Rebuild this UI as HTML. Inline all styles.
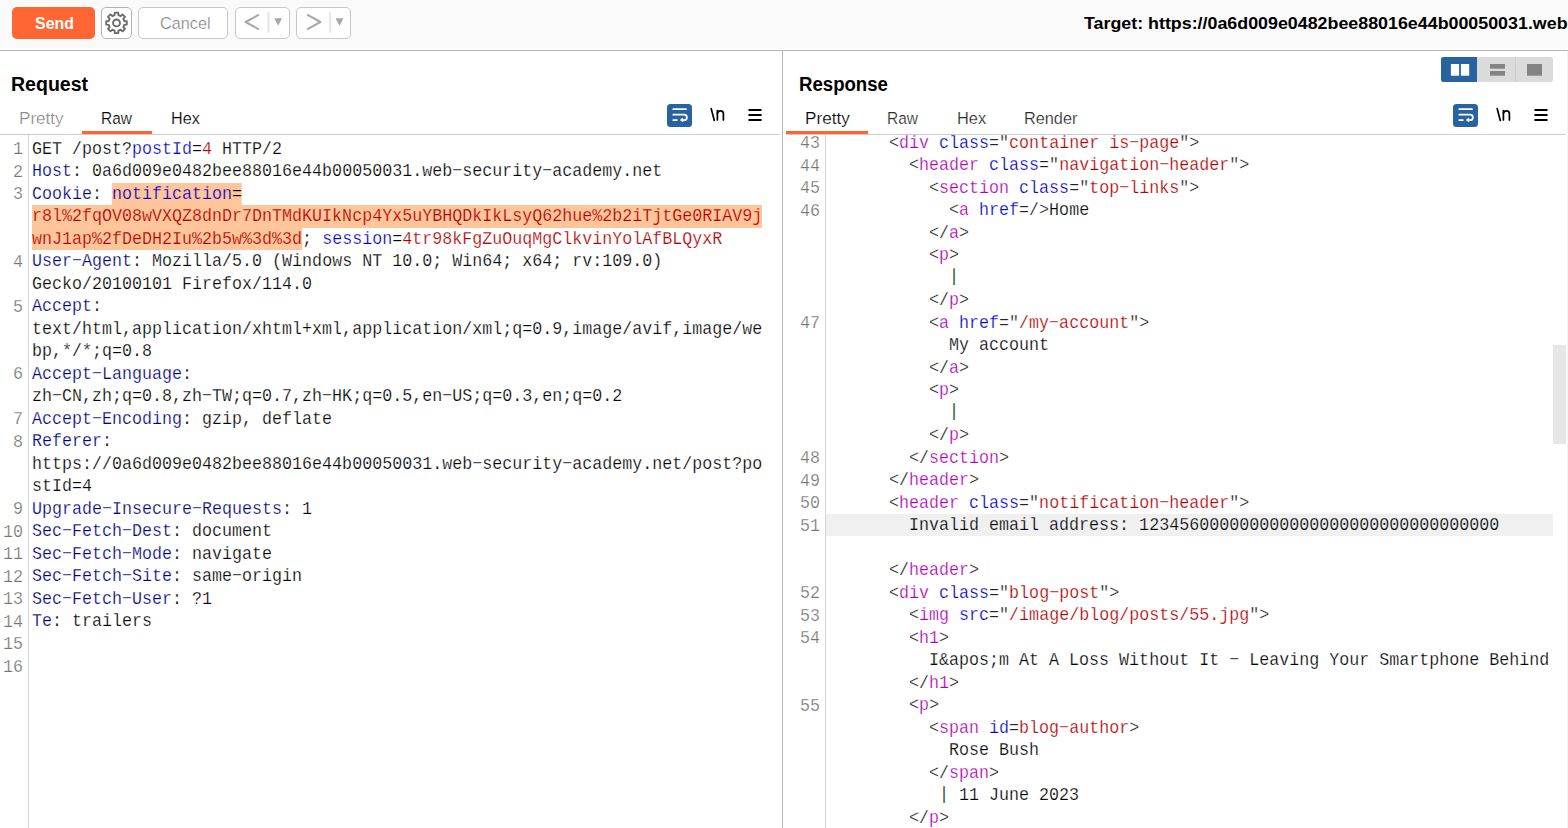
<!DOCTYPE html>
<html><head><meta charset="utf-8"><title>Burp Repeater</title>
<style>
*{box-sizing:border-box}
html,body{margin:0;padding:0}
body{width:1568px;height:828px;overflow:hidden;background:#fff;position:relative;font-family:"Liberation Sans",sans-serif;color:#000}
.abs{position:absolute}
#toolbar{left:0;top:0;width:1568px;height:49px;background:#fafafa}
#tbline{left:0;top:50px;width:1568px;height:1px;background:#b9b5b5}
.btn{position:absolute;top:7px;height:32px;border:1px solid #c8c8c8;border-radius:5px;background:#fff}
#send{left:12px;top:7px;width:83px;height:32px;background:#ff6633;border-radius:5px;color:#fff;font-weight:bold;font-size:17px;line-height:32px;text-align:center}
.sans{position:absolute;white-space:nowrap;transform-origin:0 0;line-height:24px}
.code{position:absolute;font-family:"Liberation Mono",monospace;font-size:19px;line-height:22.5px;transform:scaleX(.8774);transform-origin:0 0;color:#000;-webkit-text-stroke:0.25px #fff}
.code .l{height:22.5px;white-space:pre}
.gut{position:absolute;font-family:"Liberation Mono",monospace;font-size:18px;line-height:22.5px;transform:scaleX(.9259);transform-origin:100% 0;color:#747474;text-align:right;-webkit-text-stroke:0.25px #fff}
.gut div{height:22.5px}
.h{color:#000078}.n{color:#0000c4}.v{color:#b00000}.t{color:#b000b4}.p{color:#222}
.hl{background:#ffc69c;display:inline-block;height:22.5px;-webkit-text-stroke-color:#ffc69c}
.bar{position:relative;top:-1.2px}
.cur{-webkit-text-stroke-color:#f0f0f0}
</style></head><body>
<!-- toolbar -->
<div id="toolbar" class="abs"></div><div id="tbline" class="abs"></div>
<div id="send" class="abs"></div>
<div class="btn" style="left:101px;width:31px;border-color:#b6b2b2"></div>
<div class="btn" style="left:138px;width:90px"></div>
<div class="btn" style="left:235px;width:55px"></div>
<div class="btn" style="left:296px;width:55px"></div>


<!-- gear -->
<svg class="abs" style="left:101px;top:7px" width="32" height="32" viewBox="-16 -16 32 32"><g transform="translate(-0.5,-0.1)" fill="none" stroke="#6a6a6a" stroke-width="1.9" stroke-linejoin="round"><path d="M-1.93 -7.76 L-1.71 -10.26 L1.71 -10.26 L1.93 -7.76 L4.13 -6.85 L6.05 -8.46 L8.46 -6.05 L6.85 -4.13 L7.76 -1.93 L10.26 -1.71 L10.26 1.71 L7.76 1.93 L6.85 4.13 L8.46 6.05 L6.05 8.46 L4.13 6.85 L1.93 7.76 L1.71 10.26 L-1.71 10.26 L-1.93 7.76 L-4.13 6.85 L-6.05 8.46 L-8.46 6.05 L-6.85 4.13 L-7.76 1.93 L-10.26 1.71 L-10.26 -1.71 L-7.76 -1.93 L-6.85 -4.13 L-8.46 -6.05 L-6.05 -8.46 L-4.13 -6.85Z"/><circle cx="0" cy="0" r="3.45"/></g></svg>
<!-- history arrows -->
<svg class="abs" style="left:235px;top:7px" width="116" height="32" viewBox="0 0 116 32">
 <g fill="none" stroke="#a8a8a8" stroke-width="2" stroke-linejoin="round"><path d="M23.9 7.7 L10.6 15 L23.9 22.3"/><path d="M72.1 7.7 L85.4 15 L72.1 22.3"/></g>
 <rect x="32.4" y="5" width="2" height="20.6" fill="#e4e4e4"/><rect x="94.2" y="5" width="1.8" height="20.6" fill="#e4e4e4"/>
 <path d="M39.3 11.2 L47 11.2 L43.15 18.8 Z" fill="#a6a6a6"/><path d="M100.6 11.2 L108.5 11.2 L104.55 18.8 Z" fill="#a6a6a6"/>
</svg>
<!-- layout toggle -->
<svg class="abs" style="left:1441px;top:57px" width="113" height="26" viewBox="0 0 113 26">
 <rect x="0" y="0" width="112" height="25" rx="2.8" fill="#dbdbdb"/>
 <path d="M2.8 0 H36 V25 H2.8 A2.8 2.8 0 0 1 0 22.2 V2.8 A2.8 2.8 0 0 1 2.8 0Z" fill="#28629f"/>
 <rect x="74" y="0" width="1" height="25" fill="#cfcfcf"/>
 <rect x="9.9" y="7" width="8.2" height="11.7" fill="#fff"/><rect x="19.9" y="7" width="8.3" height="11.7" fill="#fff"/>
 <rect x="49" y="7" width="15" height="4.7" fill="#848484"/><rect x="49" y="14" width="15" height="4.7" fill="#848484"/>
 <rect x="86" y="7" width="15" height="11.7" fill="#848484"/>
</svg>
<!-- wrap / newline / menu icons: request -->
<svg class="abs" style="left:667px;top:104px" width="100" height="24" viewBox="0 0 100 24">
 <rect x="0" y="0" width="25" height="23" rx="3.5" fill="#28629f"/>
 <g fill="none" stroke="#fff" stroke-width="1.8" stroke-linecap="round"><path d="M6.3 5.2 H19"/><path d="M6.3 10.7 H17.1 A2.75 2.75 0 0 1 17.1 16.2 H15.5"/><path d="M6.3 16.1 H9.9"/></g>
 <path d="M15.7 14.1 L13.3 15.95 L15.7 17.8 Z" fill="#fff" stroke="#fff" stroke-width="0.7" stroke-linejoin="round"/>
 <g fill="none" stroke="#000" stroke-width="1.7" stroke-linecap="round"><path d="M44.2 4.6 L47.3 16.5"/><path d="M50.4 16 V6.6"/><path d="M50.4 9.4 Q50.9 6.8 53.6 6.8 Q56.4 6.8 56.4 9.7 V16"/></g>
 <rect x="81.3" y="5.1" width="13.4" height="1.85" rx=".7" fill="#000"/><rect x="81.3" y="10.1" width="13.4" height="1.85" rx=".7" fill="#000"/><rect x="81.3" y="15.1" width="13.4" height="1.85" rx=".7" fill="#000"/>
</svg>
<svg class="abs" style="left:1453px;top:104px" width="100" height="24" viewBox="0 0 100 24">
 <rect x="0" y="0" width="25" height="23" rx="3.5" fill="#28629f"/>
 <g fill="none" stroke="#fff" stroke-width="1.8" stroke-linecap="round"><path d="M6.3 5.2 H19"/><path d="M6.3 10.7 H17.1 A2.75 2.75 0 0 1 17.1 16.2 H15.5"/><path d="M6.3 16.1 H9.9"/></g>
 <path d="M15.7 14.1 L13.3 15.95 L15.7 17.8 Z" fill="#fff" stroke="#fff" stroke-width="0.7" stroke-linejoin="round"/>
 <g fill="none" stroke="#000" stroke-width="1.7" stroke-linecap="round"><path d="M44.2 4.6 L47.3 16.5"/><path d="M50.4 16 V6.6"/><path d="M50.4 9.4 Q50.9 6.8 53.6 6.8 Q56.4 6.8 56.4 9.7 V16"/></g>
 <rect x="81.3" y="5.1" width="13.4" height="1.85" rx=".7" fill="#000"/><rect x="81.3" y="10.1" width="13.4" height="1.85" rx=".7" fill="#000"/><rect x="81.3" y="15.1" width="13.4" height="1.85" rx=".7" fill="#000"/>
</svg>


<div class="sans" id="t_send" style="left:34.70px;top:10.91px;font-size:17.30px;font-weight:bold;color:#fff;transform:scaleX(0.9231)">Send</div>
<div class="sans" id="t_cancel" style="left:159.50px;top:11.61px;font-size:17.00px;-webkit-text-stroke:0.2px #fff;color:#8c8c8c;transform:scaleX(0.9552)">Cancel</div>
<div class="sans" id="t_target" style="left:1084.30px;top:11.86px;font-size:17.00px;font-weight:bold;color:#000;transform:scaleX(1.0492)">Target: https://0a6d009e0482bee88016e44b00050031.web</div>
<div class="sans" id="t_request" style="left:11.40px;top:72.21px;font-size:19.60px;font-weight:bold;color:#000;transform:scaleX(0.9977)">Request</div>
<div class="sans" id="t_response" style="left:799.00px;top:72.21px;font-size:19.60px;font-weight:bold;color:#000;transform:scaleX(0.9497)">Response</div>
<div class="sans" id="t_q_pretty" style="left:19.00px;top:106.98px;font-size:16.80px;-webkit-text-stroke:0.2px #fff;color:#8c8c8c;transform:scaleX(1.0170)">Pretty</div>
<div class="sans" id="t_q_raw" style="left:100.90px;top:106.98px;font-size:16.80px;-webkit-text-stroke:0.2px #fff;color:#000;transform:scaleX(0.9190)">Raw</div>
<div class="sans" id="t_q_hex" style="left:171.10px;top:106.98px;font-size:16.80px;-webkit-text-stroke:0.2px #fff;color:#000;transform:scaleX(0.9633)">Hex</div>
<div class="sans" id="t_s_pretty" style="left:805.00px;top:106.88px;font-size:16.80px;-webkit-text-stroke:0.2px #fff;color:#000;transform:scaleX(1.0209)">Pretty</div>
<div class="sans" id="t_s_raw" style="left:886.90px;top:106.88px;font-size:16.80px;-webkit-text-stroke:0.2px #fff;color:#2b2b2b;transform:scaleX(0.9243)">Raw</div>
<div class="sans" id="t_s_hex" style="left:956.90px;top:106.88px;font-size:16.80px;-webkit-text-stroke:0.2px #fff;color:#2b2b2b;transform:scaleX(0.9758)">Hex</div>
<div class="sans" id="t_s_render" style="left:1024.00px;top:106.88px;font-size:16.80px;-webkit-text-stroke:0.2px #fff;color:#2b2b2b;transform:scaleX(0.9701)">Render</div>
<!-- panel divider -->
<div class="abs" style="left:782px;top:51px;width:1px;height:777px;background:#b9b5b5"></div>

<div class="abs" style="left:1567px;top:51px;width:1px;height:777px;background:#f3f3f3"></div>
<!-- Request header -->
<div class="abs" style="left:82px;top:131px;width:70px;height:3px;background:#ff6633"></div>
<div class="abs" style="left:0;top:134px;width:780px;height:1px;background:#c8cccc"></div>

<!-- Response header -->
<div class="abs" style="left:786px;top:131px;width:82px;height:3px;background:#ff6633"></div>
<div class="abs" style="left:786px;top:134px;width:780px;height:1px;background:#c8cccc"></div>

<!-- Request editor -->
<div class="abs" style="left:0;top:135px;width:781px;height:693px;overflow:hidden">
  <div class="abs" style="left:28px;top:0;width:1px;height:693px;background:#d6d6d6"></div>
  <div class="gut" style="right:758px;top:3px;width:40px">
<div>1</div>
<div>2</div>
<div>3</div>
<div></div>
<div></div>
<div>4</div>
<div></div>
<div>5</div>
<div></div>
<div></div>
<div>6</div>
<div></div>
<div>7</div>
<div>8</div>
<div></div>
<div></div>
<div>9</div>
<div>10</div>
<div>11</div>
<div>12</div>
<div>13</div>
<div>14</div>
<div>15</div>
<div>16</div>
  </div>
  <div class="code" style="left:32px;top:2.5px;width:860px">
<div class="l ">GET /post?<span class="n">postId</span>=<span class="v">4</span> HTTP/2</div>
<div class="l "><span class="h">Host</span>: 0a6d009e0482bee88016e44b00050031.web−security−academy.net</div>
<div class="l "><span class="h">Cookie</span>: <span class="hl"><span class="n">notification</span>=</span></div>
<div class="l "><span class="hl"><span class="v">r8l%2fqOV08wVXQZ8dnDr7DnTMdKUIkNcp4Yx5uYBHQDkIkLsyQ62hue%2b2iTjtGe0RIAV9j</span></span></div>
<div class="l "><span class="hl"><span class="v">wnJ1ap%2fDeDH2Iu%2b5w%3d%3d</span></span>; <span class="n">session</span>=<span class="v">4tr98kFgZuOuqMgClkvinYolAfBLQyxR</span></div>
<div class="l "><span class="h">User−Agent</span>: Mozilla/5.0 (Windows NT 10.0; Win64; x64; rv:109.0)</div>
<div class="l ">Gecko/20100101 Firefox/114.0</div>
<div class="l "><span class="h">Accept</span>:</div>
<div class="l ">text/html,application/xhtml+xml,application/xml;q=0.9,image/avif,image/we</div>
<div class="l ">bp,*/*;q=0.8</div>
<div class="l "><span class="h">Accept−Language</span>:</div>
<div class="l ">zh−CN,zh;q=0.8,zh−TW;q=0.7,zh−HK;q=0.5,en−US;q=0.3,en;q=0.2</div>
<div class="l "><span class="h">Accept−Encoding</span>: gzip, deflate</div>
<div class="l "><span class="h">Referer</span>:</div>
<div class="l ">https://0a6d009e0482bee88016e44b00050031.web−security−academy.net/post?po</div>
<div class="l ">stId=4</div>
<div class="l "><span class="h">Upgrade−Insecure−Requests</span>: 1</div>
<div class="l "><span class="h">Sec−Fetch−Dest</span>: document</div>
<div class="l "><span class="h">Sec−Fetch−Mode</span>: navigate</div>
<div class="l "><span class="h">Sec−Fetch−Site</span>: same−origin</div>
<div class="l "><span class="h">Sec−Fetch−User</span>: ?1</div>
<div class="l "><span class="h">Te</span>: trailers</div>
<div class="l "></div>
<div class="l "></div>
  </div>
</div>

<!-- Response editor -->
<div class="abs" style="left:786px;top:135px;width:782px;height:693px;overflow:hidden">
  <div class="abs" style="left:40px;top:379px;width:727px;height:21.75px;background:#f0f0f0"></div>
  <div class="abs" style="left:39px;top:0;width:1px;height:693px;background:#d6d6d6"></div>
  <div class="gut" style="right:748px;top:-3px;width:40px">
<div>43</div>
<div>44</div>
<div>45</div>
<div>46</div>
<div></div>
<div></div>
<div></div>
<div></div>
<div>47</div>
<div></div>
<div></div>
<div></div>
<div></div>
<div></div>
<div>48</div>
<div>49</div>
<div>50</div>
<div>51</div>
<div></div>
<div></div>
<div>52</div>
<div>53</div>
<div>54</div>
<div></div>
<div></div>
<div>55</div>
<div></div>
<div></div>
<div></div>
<div></div>
<div></div>
  </div>
  <div class="code" style="left:43px;top:-3.5px;width:830px">
<div class="l ">      <span class="p">&lt;</span><span class="t">div</span> <span class="n">class</span><span class="p">=</span><span class="p">"</span><span class="v">container is−page</span><span class="p">"</span><span class="p">&gt;</span></div>
<div class="l ">        <span class="p">&lt;</span><span class="t">header</span> <span class="n">class</span><span class="p">=</span><span class="p">"</span><span class="v">navigation−header</span><span class="p">"</span><span class="p">&gt;</span></div>
<div class="l ">          <span class="p">&lt;</span><span class="t">section</span> <span class="n">class</span><span class="p">=</span><span class="p">"</span><span class="v">top−links</span><span class="p">"</span><span class="p">&gt;</span></div>
<div class="l ">            <span class="p">&lt;</span><span class="t">a</span> <span class="n">href</span><span class="p">=/&gt;</span>Home</div>
<div class="l ">          <span class="p">&lt;/</span><span class="t">a</span><span class="p">&gt;</span></div>
<div class="l ">          <span class="p">&lt;</span><span class="t">p</span><span class="p">&gt;</span></div>
<div class="l ">            <span class="bar">|</span></div>
<div class="l ">          <span class="p">&lt;/</span><span class="t">p</span><span class="p">&gt;</span></div>
<div class="l ">          <span class="p">&lt;</span><span class="t">a</span> <span class="n">href</span><span class="p">=</span><span class="p">"</span><span class="v">/my−account</span><span class="p">"</span><span class="p">&gt;</span></div>
<div class="l ">            My account</div>
<div class="l ">          <span class="p">&lt;/</span><span class="t">a</span><span class="p">&gt;</span></div>
<div class="l ">          <span class="p">&lt;</span><span class="t">p</span><span class="p">&gt;</span></div>
<div class="l ">            <span class="bar">|</span></div>
<div class="l ">          <span class="p">&lt;/</span><span class="t">p</span><span class="p">&gt;</span></div>
<div class="l ">        <span class="p">&lt;/</span><span class="t">section</span><span class="p">&gt;</span></div>
<div class="l ">      <span class="p">&lt;/</span><span class="t">header</span><span class="p">&gt;</span></div>
<div class="l ">      <span class="p">&lt;</span><span class="t">header</span> <span class="n">class</span><span class="p">=</span><span class="p">"</span><span class="v">notification−header</span><span class="p">"</span><span class="p">&gt;</span></div>
<div class="l cur">        Invalid email address: 123456000000000000000000000000000000</div>
<div class="l "></div>
<div class="l ">      <span class="p">&lt;/</span><span class="t">header</span><span class="p">&gt;</span></div>
<div class="l ">      <span class="p">&lt;</span><span class="t">div</span> <span class="n">class</span><span class="p">=</span><span class="p">"</span><span class="v">blog−post</span><span class="p">"</span><span class="p">&gt;</span></div>
<div class="l ">        <span class="p">&lt;</span><span class="t">img</span> <span class="n">src</span><span class="p">=</span><span class="p">"</span><span class="v">/image/blog/posts/55.jpg</span><span class="p">"</span><span class="p">&gt;</span></div>
<div class="l ">        <span class="p">&lt;</span><span class="t">h1</span><span class="p">&gt;</span></div>
<div class="l ">          I&amp;apos;m At A Loss Without It − Leaving Your Smartphone Behind</div>
<div class="l ">        <span class="p">&lt;/</span><span class="t">h1</span><span class="p">&gt;</span></div>
<div class="l ">        <span class="p">&lt;</span><span class="t">p</span><span class="p">&gt;</span></div>
<div class="l ">          <span class="p">&lt;</span><span class="t">span</span> <span class="n">id</span><span class="p">=</span><span class="v">blog−author</span><span class="p">&gt;</span></div>
<div class="l ">            Rose Bush</div>
<div class="l ">          <span class="p">&lt;/</span><span class="t">span</span><span class="p">&gt;</span></div>
<div class="l ">           <span class="bar">|</span> 11 June 2023</div>
<div class="l ">        <span class="p">&lt;/</span><span class="t">p</span><span class="p">&gt;</span></div>
  </div>
  <div class="abs" style="left:767px;top:0;width:15px;height:693px;background:#fff"></div>
  <div class="abs" style="left:767px;top:210px;width:13px;height:99px;background:#e6e6e6"></div>
  <div class="abs" style="left:781px;top:0;width:1px;height:693px;background:#f3f3f3"></div>
</div>
</body></html>
